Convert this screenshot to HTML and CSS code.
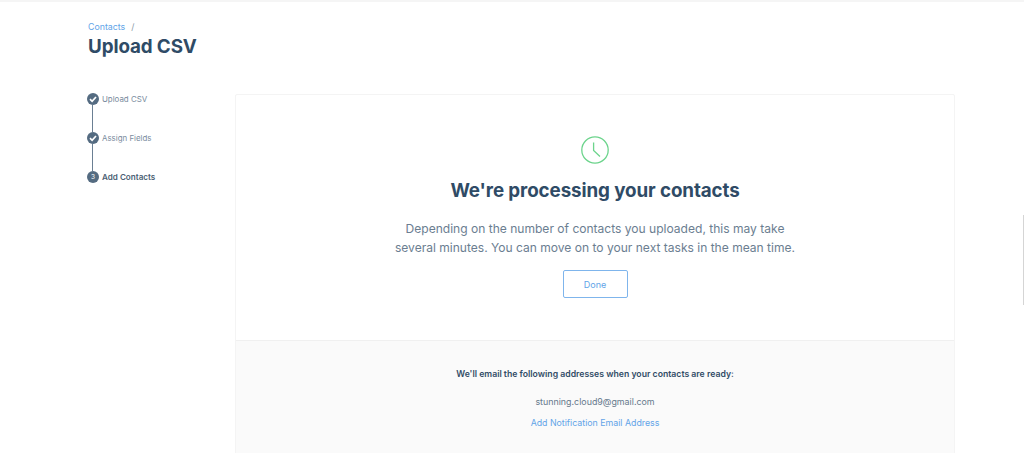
FILE: index.html
```html
<!DOCTYPE html>
<html lang="en">
<head>
<meta charset="utf-8">
<title>Upload CSV</title>
<link rel="stylesheet" href="styles.css">
</head>
<body>
<div class="topbar"></div>
<main class="page">
  <header class="head">
    <div class="crumbs"><a class="link">Contacts</a><span class="slash">/</span></div>
    <h1 class="title">Upload CSV</h1>
  </header>
  <div class="columns">
    <ol class="steps">
      <li class="step done">
        <svg class="badge" viewBox="0 0 12 12"><circle cx="6" cy="6" r="6" fill="#546b81"/><path d="M3 6.2 5.1 8.3 9 4" fill="none" stroke="#fff" stroke-width="1.7"/></svg>
        <span>Upload CSV</span>
      </li>
      <li class="step done">
        <svg class="badge" viewBox="0 0 12 12"><circle cx="6" cy="6" r="6" fill="#546b81"/><path d="M3 6.2 5.1 8.3 9 4" fill="none" stroke="#fff" stroke-width="1.7"/></svg>
        <span>Assign Fields</span>
      </li>
      <li class="step current">
        <span class="badge num">3</span>
        <span>Add Contacts</span>
      </li>
    </ol>
    <section class="card">
      <div class="card-main">
        <svg class="clock" viewBox="0 0 28 28"><circle cx="14" cy="14" r="13.2" fill="none" stroke="#6cd48c" stroke-width="1.3"/><path d="M12.6 6.5V14.5L19 20.5" fill="none" stroke="#6cd48c" stroke-width="1.3"/></svg>
        <h2 class="card-title">We're processing your contacts</h2>
        <p class="card-text">Depending on the number of contacts you uploaded, this may take<br>several minutes. You can move on to your next tasks in the mean time.</p>
        <button class="btn">Done</button>
      </div>
      <div class="card-foot">
        <p class="foot-title">We'll email the following addresses when your contacts are ready:</p>
        <p class="foot-mail">stunning.cloud9@gmail.com</p>
        <a class="link foot-link">Add Notification Email Address</a>
      </div>
    </section>
  </div>
</main>
<div class="scrollthumb"></div>
</body>
</html>
```
FILE: styles.css
```css
* { box-sizing: border-box; }
html, body { margin: 0; height: 453px; overflow: hidden; }
body { background: #fff; font-family: Inter, "Noto Sans", sans-serif; color: #546b81; }
.topbar { height: 2px; background: #f5f5f5; }
.page { padding: 18px 69px 0 88px; }
.link { color: #62a4e8; }
.crumbs { font-size: 8.8px; line-height: 14px; display: flex; gap: 6px; }
.slash { color: #8a99a8; }
.title { margin: 1px 0 0; font-size: 18.8px; line-height: 24px; font-weight: 700; color: #2f4b66; letter-spacing: -0.1px; }
.columns { display: flex; margin-top: 35px; }
.steps { list-style: none; margin: -1px 0 0 -1px; padding: 0; width: 148px; font-size: 7.9px; color: #7a8c9e; }
.step { position: relative; display: flex; align-items: center; gap: 3px; height: 12px; margin-bottom: 27px; }
.step.done::after { content: ""; position: absolute; left: 5px; top: 12px; width: 1px; height: 27px; background: #6a7f93; }
.step.current { color: #4a5e73; font-weight: 600; font-size: 8.1px; }
.badge { width: 12px; height: 12px; flex: none; }
.num { border-radius: 50%; background: #546b81; color: #fff; font-size: 6.5px; line-height: 12px; text-align: center; font-weight: 400; }
.card { width: 720px; border: 1px solid #f4f4f4; border-radius: 2px; flex: none; }
.card-main { height: 246px; padding-top: 41px; display: flex; flex-direction: column; align-items: center; border-bottom: 1px solid #f0f0f0; }
.clock { width: 28px; height: 28px; }
.card-title { margin: 14px 0 0; font-size: 18.8px; line-height: 26px; font-weight: 700; color: #2f4b66; letter-spacing: -0.1px; }
.card-text { margin: 15px 0 0; font-size: 12.05px; line-height: 19px; text-align: center; color: #6b7e91; }
.btn { margin-top: 13px; width: 65px; height: 28px; background: #fff; border: 1px solid #7fb5ec; border-radius: 2px; color: #62a4e8; font: 9px Inter, sans-serif; }
.card-foot { background: #fafafa; height: 120px; padding-top: 27px; text-align: center; }
.card-foot p { margin: 0; }
.foot-title { font-weight: 600; color: #324d67; font-size: 8.7px; line-height: 12px; }
.foot-mail { margin-top: 16px !important; line-height: 12px; color: #66798c; font-size: 8.9px; }
.foot-link { display: block; margin-top: 9px; line-height: 12px; font-size: 8.8px; }
.scrollthumb { position: absolute; right: 0; top: 215px; width: 1px; height: 90px; background: #d5d5d5; }
```
